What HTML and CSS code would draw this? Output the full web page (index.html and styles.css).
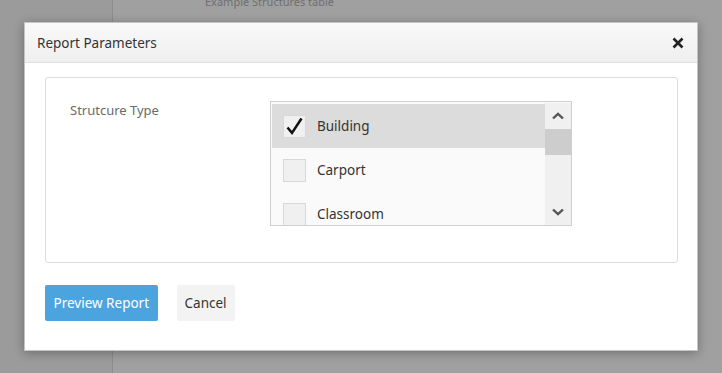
FILE: index.html
```html
<!DOCTYPE html>
<html lang="en">
<head>
    <meta charset="UTF-8">
    <title>Report Parameters</title>
    <link rel="stylesheet" href="styles.css">
</head>
<body>
    <div class="page">
        <aside class="sidebar"></aside>
        <main class="content">
            <p class="table-caption">Example Structures table</p>
        </main>
    </div>

    <div class="modal">
        <div class="modal-header">
            <h2>Report Parameters</h2>
            <span class="close">
                <svg width="12" height="12" viewBox="0 0 12 12">
                    <path d="M1.5 1.5 L10.5 10.5 M10.5 1.5 L1.5 10.5" stroke="#222" stroke-width="2.6" fill="none"/>
                </svg>
            </span>
        </div>
        <div class="modal-body">
            <div class="panel">
                <label class="field-label">Strutcure Type</label>
                <div class="listbox">
                    <ul class="options">
                        <li class="option selected">
                            <span class="check">
                                <svg width="21" height="21" viewBox="0 0 21 21">
                                    <path d="M3.5 11.5 L8 17 L17.5 2.5" stroke="#111" stroke-width="2.5" fill="none"/>
                                </svg>
                            </span>
                            Building
                        </li>
                        <li class="option"><span class="check"></span>Carport</li>
                        <li class="option"><span class="check"></span>Classroom</li>
                    </ul>
                    <div class="scrollbar">
                        <span class="arrow">
                            <svg width="12" height="8" viewBox="0 0 12 8">
                                <path d="M1 6.5 L6 1.8 L11 6.5" stroke="#555" stroke-width="2.4" fill="none"/>
                            </svg>
                        </span>
                        <span class="thumb"></span>
                        <span class="track"></span>
                        <span class="arrow">
                            <svg width="12" height="8" viewBox="0 0 12 8">
                                <path d="M1 1.5 L6 6.2 L11 1.5" stroke="#555" stroke-width="2.4" fill="none"/>
                            </svg>
                        </span>
                    </div>
                </div>
            </div>
            <div class="actions">
                <button class="btn btn-primary">Preview Report</button>
                <button class="btn">Cancel</button>
            </div>
        </div>
    </div>
</body>
</html>
```

FILE: styles.css
```css
* {
    margin: 0;
    padding: 0;
    box-sizing: border-box;
    font-family: 'Noto Sans', 'Open Sans', sans-serif;
}

body {
    background-color: #a0a0a0;
    width: 722px;
    height: 373px;
    overflow: hidden;
}

.page {
    display: flex;
    height: 373px;
}

.sidebar {
    width: 113px;
    background-color: #9b9b9b;
    border-right: 1px solid #8d8d8d;
}

.content {
    flex: 1;
}

.table-caption {
    color: #6f6f6f;
    font-size: 11px;
    line-height: 12px;
    margin-top: -4px;
    padding-left: 92px;
}

.modal {
    position: absolute;
    left: 24px;
    top: 22px;
    width: 674px;
    height: 329px;
    background-color: #fff;
    box-shadow: 0 2px 10px rgba(0,0,0,0.3);
    border: 1px solid #c4c4c4;
}

.modal-header {
    height: 40px;
    display: flex;
    align-items: center;
    justify-content: space-between;
    padding: 0 12px 0 12px;
    background: linear-gradient(#f9f9f9, #efefef);
    border-bottom: 1px solid #dfdfdf;
}

.modal-header h2 {
    font-size: 13.5px;
    font-weight: normal;
    color: #333;
}

.close {
    display: flex;
    margin-right: 1px;
    margin-top: 1px;
}

.modal-body {
    padding: 14px 19px 0 20px;
}

.panel {
    display: flex;
    height: 186px;
    border: 1px solid #dcdcdc;
    border-radius: 3px;
    padding: 23px 0 0 24px;
}

.field-label {
    width: 200px;
    font-size: 13px;
    color: #6a6a6a;
}

.listbox {
    display: flex;
    width: 302px;
    height: 125px;
    border: 1px solid #cfcfcf;
    padding: 1px 0 0 1px;
    background-color: #fafafa;
}

.options {
    list-style: none;
    flex: 1;
    overflow: hidden;
    padding-top: 1px;
}

.option {
    display: flex;
    align-items: center;
    height: 44px;
    padding-left: 11px;
    font-size: 13.5px;
    color: #333;
}

.option.selected {
    background-color: #dcdcdc;
}

.check {
    display: flex;
    align-items: center;
    justify-content: center;
    width: 23px;
    height: 23px;
    margin-right: 11px;
    background-color: #f0f0f0;
    border: 1px solid #d8d8d8;
}

.scrollbar {
    display: flex;
    flex-direction: column;
    width: 26px;
    background-color: #f0f0f0;
}

.arrow {
    height: 26px;
    display: flex;
    align-items: center;
    justify-content: center;
}

.thumb {
    height: 26px;
    background-color: #cdcdcd;
}

.track {
    flex: 1;
}

.actions {
    display: flex;
    gap: 19px;
    margin-top: 22px;
}

.btn {
    height: 36px;
    padding: 0 8px;
    border: none;
    border-radius: 2px;
    font-size: 13.5px;
    color: #333;
    background-color: #f3f3f3;
    cursor: pointer;
}

.btn-primary {
    padding: 0 8.5px;
    background-color: #4ca4df;
    color: #fff;
}
```
